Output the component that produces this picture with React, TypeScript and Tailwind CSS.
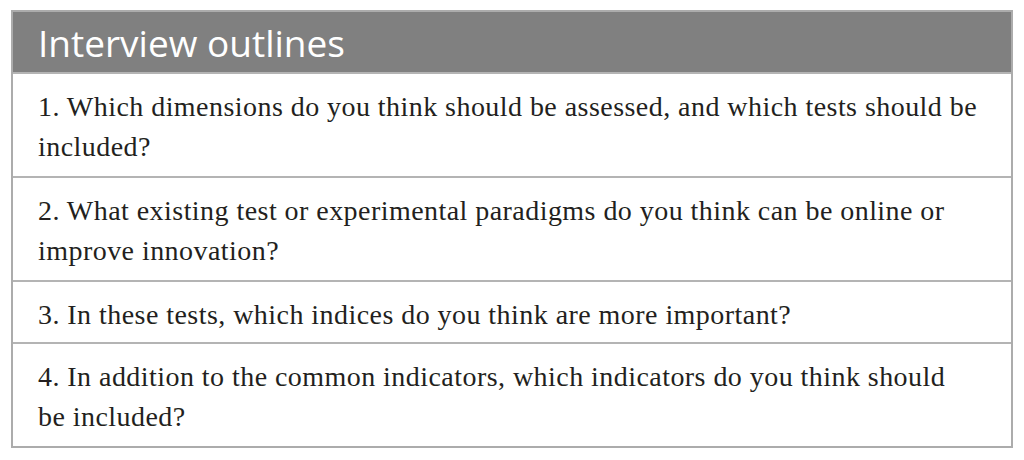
const rows = [
  ["1. Which dimensions do you think should be assessed, and which tests should be", "included?"],
  ["2. What existing test or experimental paradigms do you think can be online or", "improve innovation?"],
  ["3. In these tests, which indices do you think are more important?"],
  ["4. In addition to the common indicators, which indicators do you think should", "be included?"],
];

export default function App() {
  return (
    <div className="min-h-[460px] w-[1024px] bg-white pt-[10px] pl-[11px]">
      <div className="w-[1002px] border-2 border-[#acacac]">
        {/* Header */}
        <div className="h-[62px] bg-[#808080] flex items-center px-[25px] border-b-2 border-[#b4b4b4]">
          <h1 className="text-[37px] leading-none text-white font-['Open_Sans',sans-serif]">
            Interview outlines
          </h1>
        </div>

        {/* Rows */}
        {rows.map((lines, i) => (
          <div
            key={i}
            className={
              "pl-[25px] pr-[20px] pt-[13px] text-[28px] leading-[40px] tracking-[0.45px] whitespace-nowrap text-[#231f20] font-['Liberation_Serif',serif] " +
              (lines.length > 1 ? "pb-[9px] " : "pb-[7px] ") +
              (i < rows.length - 1 ? "border-b-2 border-[#b4b4b4]" : "")
            }
          >
            {lines.map((line, j) => (
              <div key={j}>{line}</div>
            ))}
          </div>
        ))}
      </div>
    </div>
  );
}
